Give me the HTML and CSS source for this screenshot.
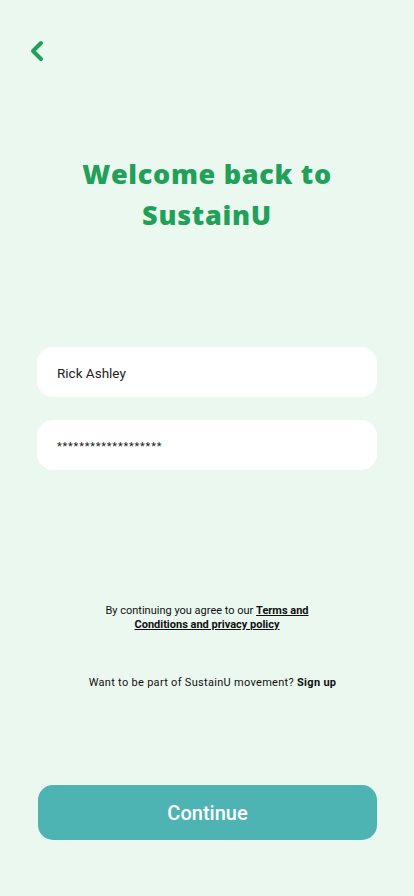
FILE: index.html
```html
<!DOCTYPE html>
<html lang="en">
<head>
<meta charset="utf-8">
<title>Welcome back to SustainU</title>
<link rel="stylesheet" href="styles.css">
</head>
<body>
<main class="screen">
  <header class="topbar">
    <button class="back" aria-label="Back">
      <svg width="16" height="22" viewBox="0 0 16 22"><path d="M12 3 L4 11 L12 19" fill="none" stroke="#22a05a" stroke-width="4" stroke-linecap="round" stroke-linejoin="round"/></svg>
    </button>
  </header>
  <h1 class="title">Welcome back to<br>SustainU</h1>
  <form class="form">
    <div class="field">Rick Ashley</div>
    <div class="field pw">*******************</div>
  </form>
  <p class="terms">By continuing you agree to our <a href="#">Terms and<br>Conditions and privacy policy</a></p>
  <p class="signup">Want to be part of SustainU movement? <b>Sign up</b></p>
  <button class="cta" type="button">Continue</button>
</main>
</body>
</html>
```
FILE: styles.css
```css
* { box-sizing: border-box; }
html, body { margin: 0; padding: 0; }
body {
  background: #ebf8f0;
  font-family: Roboto, Inter, "Noto Sans", sans-serif;
  color: #1a1a1a;
}
.screen {
  width: 414px;
  height: 896px;
  display: flex;
  flex-direction: column;
  padding: 0 37px;
}
.topbar {
  height: 40px;
  margin-top: 40px;
  margin-left: -11px;
}
.back {
  background: none;
  border: 0;
  padding: 0;
  width: 22px;
  height: 22px;
  display: flex;
  align-items: center;
  justify-content: center;
}
.title {
  margin: 73px 0 0;
  text-align: center;
  color: #22a05a;
  font-family: "Open Sans", Inter, sans-serif;
  font-weight: 800;
  font-size: 27px;
  line-height: 41px;
  letter-spacing: 0.7px;
}
.form {
  margin-top: 112px;
  display: flex;
  flex-direction: column;
  gap: 23px;
}
.field {
  height: 50px;
  background: #fff;
  border-radius: 16px;
  padding: 2px 20px 0;
  display: flex;
  align-items: center;
  font-size: 13.5px;
  color: #222;
}
.field.pw { font-size: 11px; letter-spacing: 0.8px; padding-top: 3px; }
.terms {
  margin: 134px 0 0;
  text-align: center;
  font-size: 11px;
  line-height: 14px;
  color: #111;
}
.terms a {
  color: #111;
  font-weight: 700;
  text-decoration: underline;
}
.signup {
  margin: 44px 0 0;
  padding-left: 11px;
  text-align: center;
  font-size: 11px;
  line-height: 14px;
  letter-spacing: 0.3px;
  color: #111;
}
.signup b { font-weight: 700; }
.cta {
  margin-top: auto;
  margin-bottom: 56px;
  height: 55px;
  width: 339px;
  margin-left: 1px;
  border: 0;
  border-radius: 15px;
  background: #4db3b3;
  color: #fff;
  font-family: Roboto, Inter, sans-serif;
  font-weight: 500;
  font-size: 20px;
}
```
